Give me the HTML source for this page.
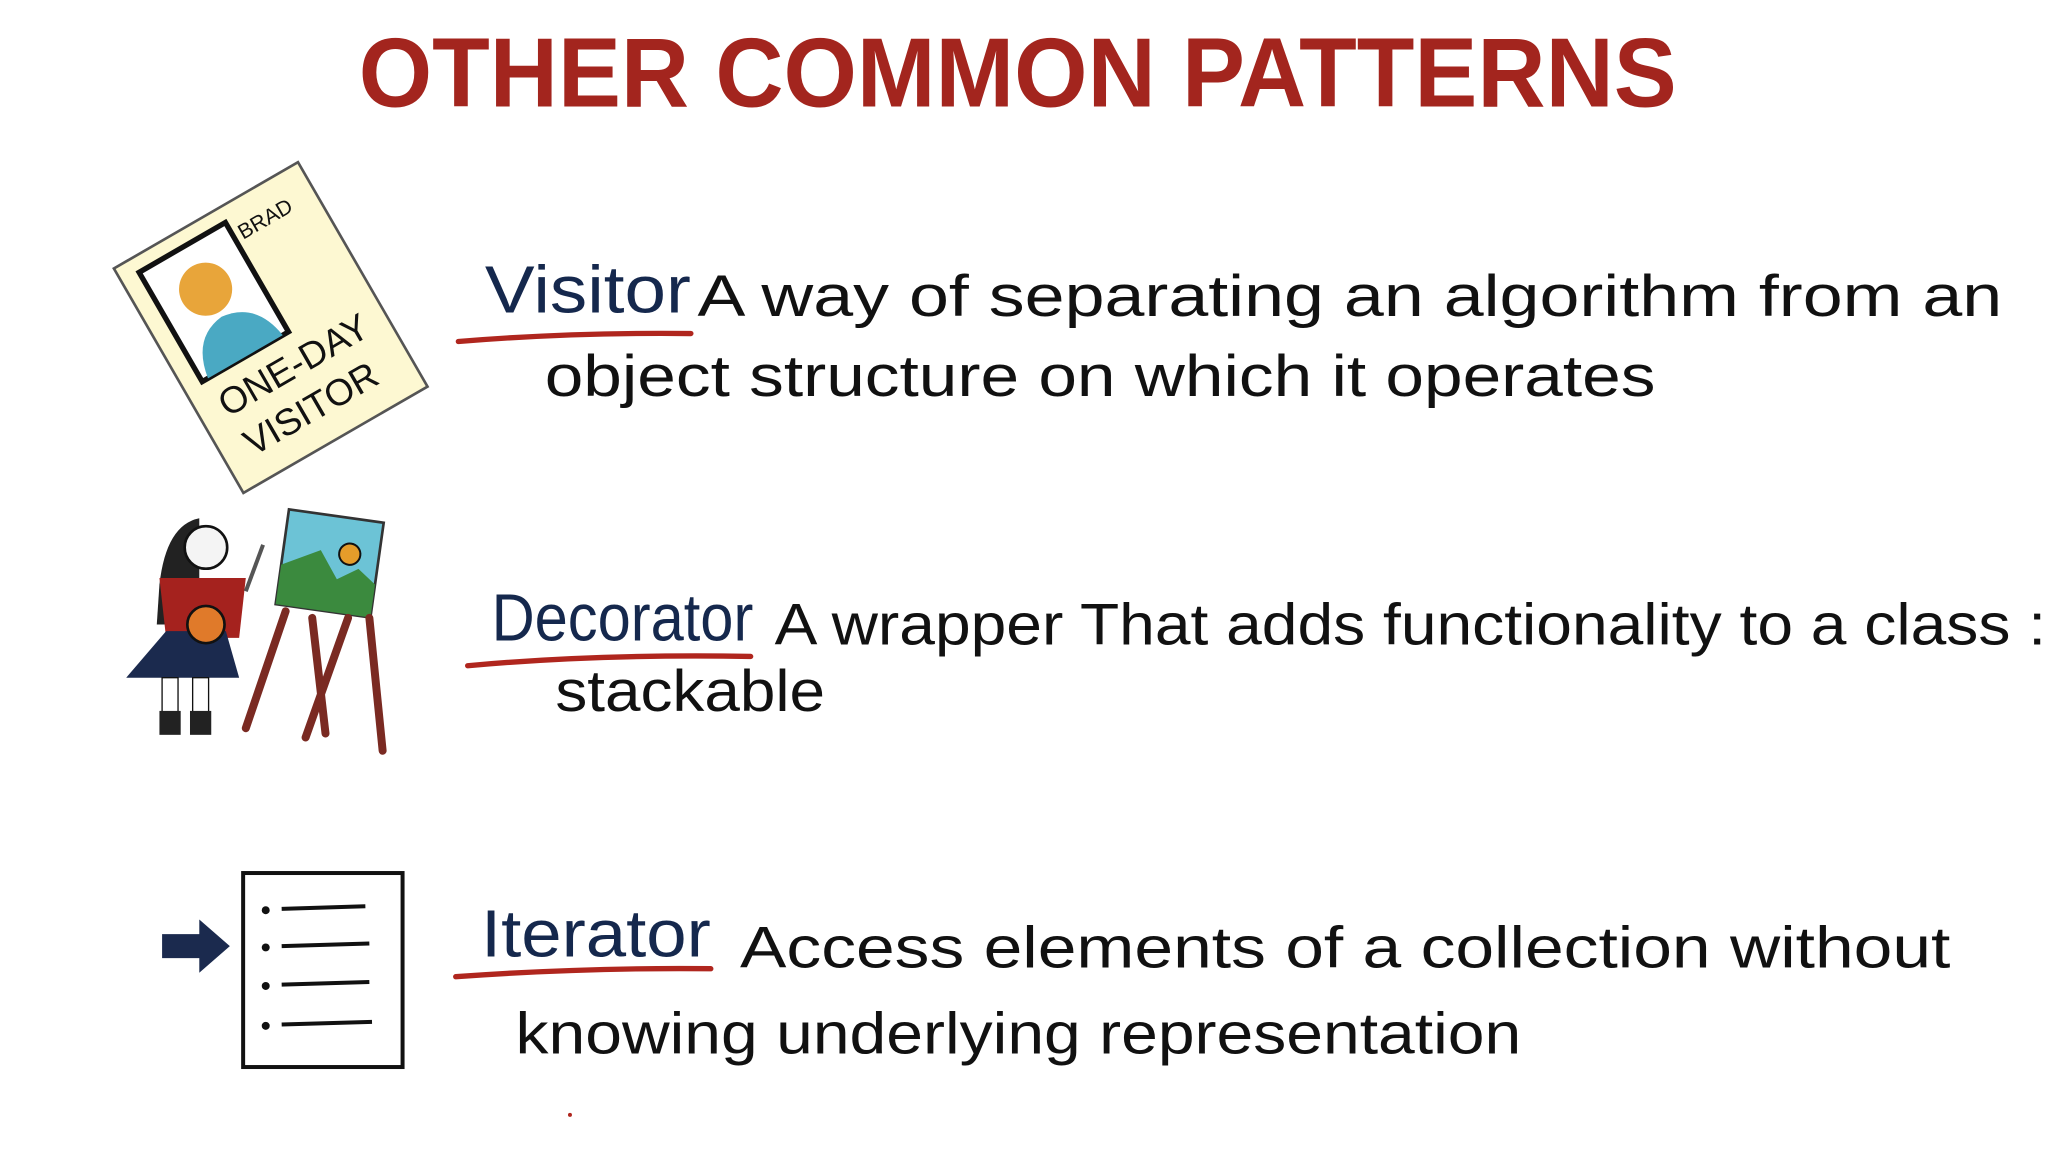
<!DOCTYPE html>
<html><head><meta charset="utf-8"><style>
html,body{margin:0;padding:0;background:#fff;width:2062px;height:1176px;overflow:hidden}
svg{display:block}
text{font-family:"Liberation Sans",sans-serif}
</style></head><body>
<svg width="2062" height="1176" viewBox="0 0 1552 885" preserveAspectRatio="none" xmlns="http://www.w3.org/2000/svg">
<rect width="1552" height="885" fill="#fff"/>
<!-- Title -->
<text x="270" y="80" font-size="74" font-weight="bold" fill="#a3251e" textLength="992" lengthAdjust="spacingAndGlyphs">OTHER COMMON PATTERNS</text>

<!-- Badge -->
<g transform="rotate(-30 200 240)">
<rect x="120" y="150" width="160" height="195" fill="#fdf8d2" stroke="#555" stroke-width="2"/>
<rect x="135" y="162" width="75" height="95" fill="#fff" stroke="#111" stroke-width="4"/>
<circle cx="172" cy="198" r="20" fill="#e8a53a"/>
<path d="M140 257 Q145 225 172 222 Q200 225 205 257 Z" fill="#4aa9c3"/>
<text x="215" y="180" font-size="16" fill="#111">BRAD</text>
<text x="138" y="290" font-size="28" fill="#111">ONE-DAY</text>
<text x="140" y="325" font-size="28" fill="#111">VISITOR</text>
</g>

<!-- Visitor -->
<text x="365" y="235" font-size="50" fill="#15284d" textLength="155" lengthAdjust="spacingAndGlyphs">Visitor</text>
<path d="M345 257 Q430 250 520 251" stroke="#b0261e" stroke-width="4" fill="none" stroke-linecap="round"/>
<text x="525" y="238" font-size="44" fill="#111" textLength="982" lengthAdjust="spacingAndGlyphs">A way of separating an algorithm from an</text>
<text x="410" y="298" font-size="44" fill="#111" textLength="836" lengthAdjust="spacingAndGlyphs">object structure on which it operates</text>

<!-- Painter -->
<path d="M150 390 Q125 395 120 440 L118 470 L150 470 Z" fill="#222"/>
<circle cx="155" cy="412" r="16" fill="#f4f4f4" stroke="#111" stroke-width="2"/>
<path d="M120 435 L185 435 L180 480 L125 480 Z" fill="#a5221e"/>
<path d="M125 475 L95 510 L180 510 L170 475 Z" fill="#1b2a4e"/>
<rect x="122" y="510" width="12" height="40" fill="#fff" stroke="#111"/>
<rect x="145" y="510" width="12" height="40" fill="#fff" stroke="#111"/>
<rect x="120" y="535" width="16" height="18" fill="#222"/>
<rect x="143" y="535" width="16" height="18" fill="#222"/>
<circle cx="155" cy="470" r="14" fill="#e07a2a" stroke="#111" stroke-width="2"/>
<line x1="185" y1="445" x2="198" y2="410" stroke="#555" stroke-width="3"/>
<g transform="rotate(8 248 425)">
<rect x="212" y="388" width="72" height="72" fill="#6cc3d6" stroke="#333" stroke-width="2"/>
<path d="M212 430 L240 415 L255 435 L270 425 L284 435 L284 460 L212 460 Z" fill="#3b8a3e"/>
<circle cx="262" cy="415" r="8" fill="#e59c2a" stroke="#111" stroke-width="1.5"/>
</g>
<path d="M215 460 L185 548 M235 465 L245 552 M262 465 L230 555 M278 465 L288 565" stroke="#7a2a22" stroke-width="6" stroke-linecap="round"/>

<!-- Decorator -->
<text x="370" y="482" font-size="50" fill="#15284d" textLength="197" lengthAdjust="spacingAndGlyphs">Decorator</text>
<path d="M352 501 Q450 492 565 494" stroke="#b0261e" stroke-width="4" fill="none" stroke-linecap="round"/>
<text x="583" y="485" font-size="44" fill="#111" textLength="957" lengthAdjust="spacingAndGlyphs">A wrapper That adds functionality to a class :</text>
<text x="418" y="535" font-size="44" fill="#111" textLength="203" lengthAdjust="spacingAndGlyphs">stackable</text>

<!-- Iterator icon -->
<path d="M122 703 L150 703 L150 692 L173 712 L150 732 L150 721 L122 721 Z" fill="#1b2a4e"/>
<rect x="183" y="657" width="120" height="146" fill="#fff" stroke="#111" stroke-width="3"/>
<g fill="#111"><circle cx="200" cy="685" r="3"/><circle cx="200" cy="713" r="3"/><circle cx="200" cy="742" r="3"/><circle cx="200" cy="772" r="3"/></g>
<g stroke="#111" stroke-width="3"><line x1="212" y1="684" x2="275" y2="682"/><line x1="212" y1="712" x2="278" y2="710"/><line x1="212" y1="741" x2="278" y2="739"/><line x1="212" y1="771" x2="280" y2="769"/></g>

<!-- Iterator -->
<text x="362" y="720" font-size="50" fill="#15284d" textLength="173" lengthAdjust="spacingAndGlyphs">Iterator</text>
<path d="M343 735 Q440 728 535 729" stroke="#b0261e" stroke-width="4" fill="none" stroke-linecap="round"/>
<text x="557" y="728" font-size="44" fill="#111" textLength="911" lengthAdjust="spacingAndGlyphs">Access elements of a collection without</text>
<text x="388" y="793" font-size="44" fill="#111" textLength="757" lengthAdjust="spacingAndGlyphs">knowing underlying representation</text>
<circle cx="429" cy="839" r="1.5" fill="#b0261e"/>
</svg>
</body></html>
